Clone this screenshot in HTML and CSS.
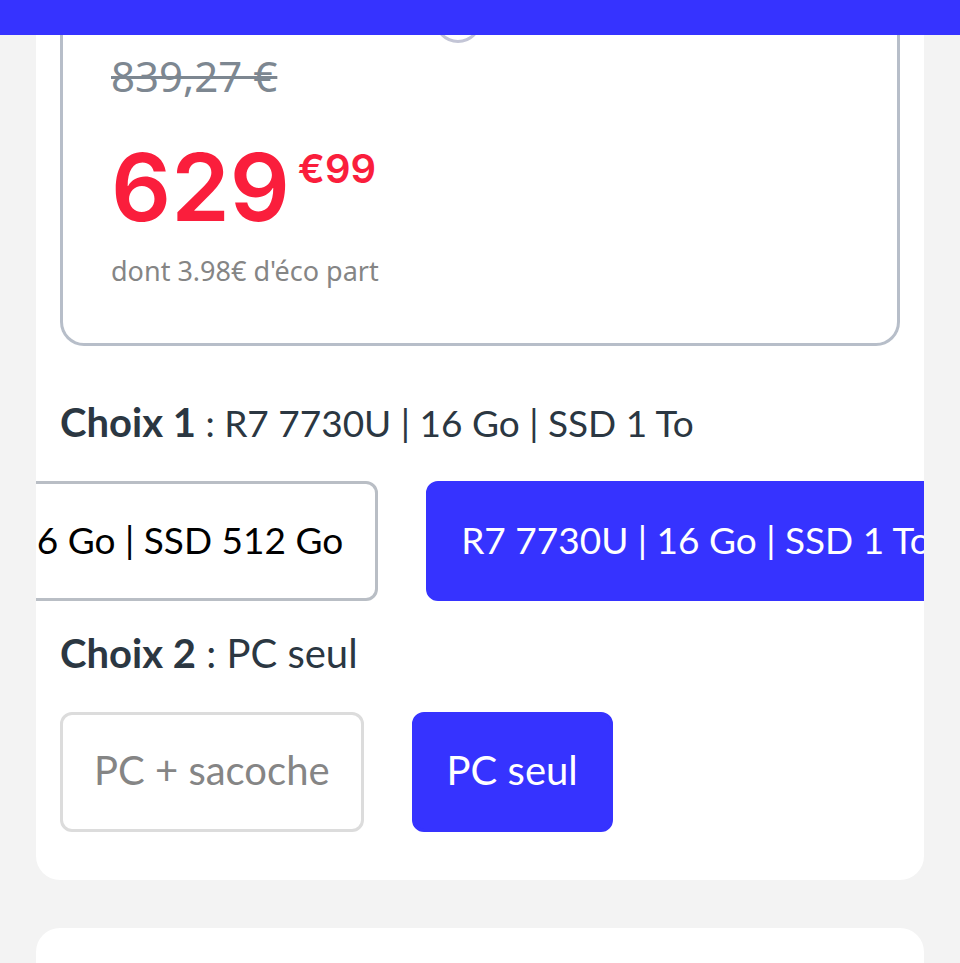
FILE: index.html
```
<!DOCTYPE html>
<html lang="fr">
<head>
    <meta charset="UTF-8">
    <meta name="viewport" content="width=device-width, initial-scale=1.0">
    <title>PC portable</title>
    <link rel="stylesheet" href="styles.css">
</head>
<body>
<header class="topbar"></header>
<main class="page">
    <section class="card product">
        <div class="offer">
            <span class="offer_dot"></span>
            <del class="old_price">839,27 €</del>
            <div class="price">
                <span class="price_main">629</span>
                <span class="price_cents">€99</span>
            </div>
            <p class="eco">dont 3.98€ d'éco part</p>
        </div>

        <h2 class="choice_title"><strong>Choix 1</strong><span class="specs"> : R7 7730U | 16 Go | SSD 1 To</span></h2>
        <div class="options options_scroll">
            <button type="button" class="option specs">R5 7530U | 16 Go | SSD 512 Go</button>
            <button type="button" class="option specs selected">R7 7730U | 16 Go | SSD 1 To</button>
        </div>

        <h2 class="choice_title"><strong>Choix 2</strong> : PC seul</h2>
        <div class="options">
            <button type="button" class="option unavailable">PC + sacoche</button>
            <button type="button" class="option selected">PC seul</button>
        </div>
    </section>
    <section class="card next"></section>
</main>
</body>
</html>
```
FILE: styles.css
```
* {
    box-sizing: border-box;
}
body {
    display: flex;
    flex-direction: column;
    min-height: 100vh;
    margin: 0;
    background: #f3f3f3;
    color: #2b3742;
    font-family: Lato, sans-serif;
    font-size: 40px;
}
.topbar {
    position: relative;
    z-index: 1;
    height: 35px;
    background: #3633ff;
}
.page {
    display: flex;
    flex: 1;
    flex-direction: column;
    gap: 48px;
    padding: 0 36px;
}
.card {
    background: white;
    border-radius: 24px;
}
.product {
    padding: 0 24px 48px;
    border-top-left-radius: 0;
    border-top-right-radius: 0;
}
.next {
    flex: 1;
    border-bottom-left-radius: 0;
    border-bottom-right-radius: 0;
}
.offer {
    position: relative;
    padding: 16px 48px 52px;
    border: 3px solid #b7bec9;
    border-top: none;
    border-radius: 0 0 24px 24px;
}
/* pagination dot of the carousel, half hidden by the top bar */
.offer_dot {
    position: absolute;
    top: -40px;
    left: calc(50% - 46px);
    width: 48px;
    height: 48px;
    border: 3px solid #c3c5d6;
    border-radius: 50%;
}
.old_price {
    display: block;
    color: #7d8791;
    font-family: "Noto Sans", sans-serif;
    font-size: 42px;
    line-height: 50px;
    text-decoration-thickness: 3px;
}
.price {
    display: flex;
    align-items: flex-start;
    gap: 8px;
    margin-top: 38px;
    color: #fa1e3c;
    font-family: Inter, sans-serif;
    font-weight: 600;
}
.price_main {
    font-size: 94px;
    line-height: 96px;
}
.price_cents {
    font-size: 40px;
    line-height: 60px;
}
.eco {
    margin: 16px 0 0;
    color: #858585;
    font-family: "Noto Sans", sans-serif;
    font-size: 27px;
    line-height: 40px;
}
.choice_title {
    margin: 48px 0 30px;
    font-size: 40px;
    font-weight: 400;
    line-height: 57px;
}
.options + .choice_title {
    margin-top: 24px;
}
.options {
    display: flex;
    gap: 48px;
}
.options_scroll {
    margin: 0 -24px;
    padding: 0 24px;
    overflow-x: auto;
    scrollbar-width: none;
    scroll-snap-type: x mandatory;
    scroll-padding-left: 390px;
}
.options_scroll .selected {
    scroll-snap-align: start;
}
.option {
    flex: none;
    height: 120px;
    padding: 0 32px 4px;
    border: 3px solid #b9bec5;
    border-radius: 12px;
    background: white;
    color: black;
    font-family: inherit;
    font-size: 40px;
    white-space: nowrap;
}
.specs {
    font-size: 37px;
}
.option.unavailable {
    padding: 0 31px 4px;
    border-color: #dcdcdc;
    color: #858585;
}
.option.selected {
    border-color: #3633ff;
    background: #3633ff;
    color: white;
}
```
